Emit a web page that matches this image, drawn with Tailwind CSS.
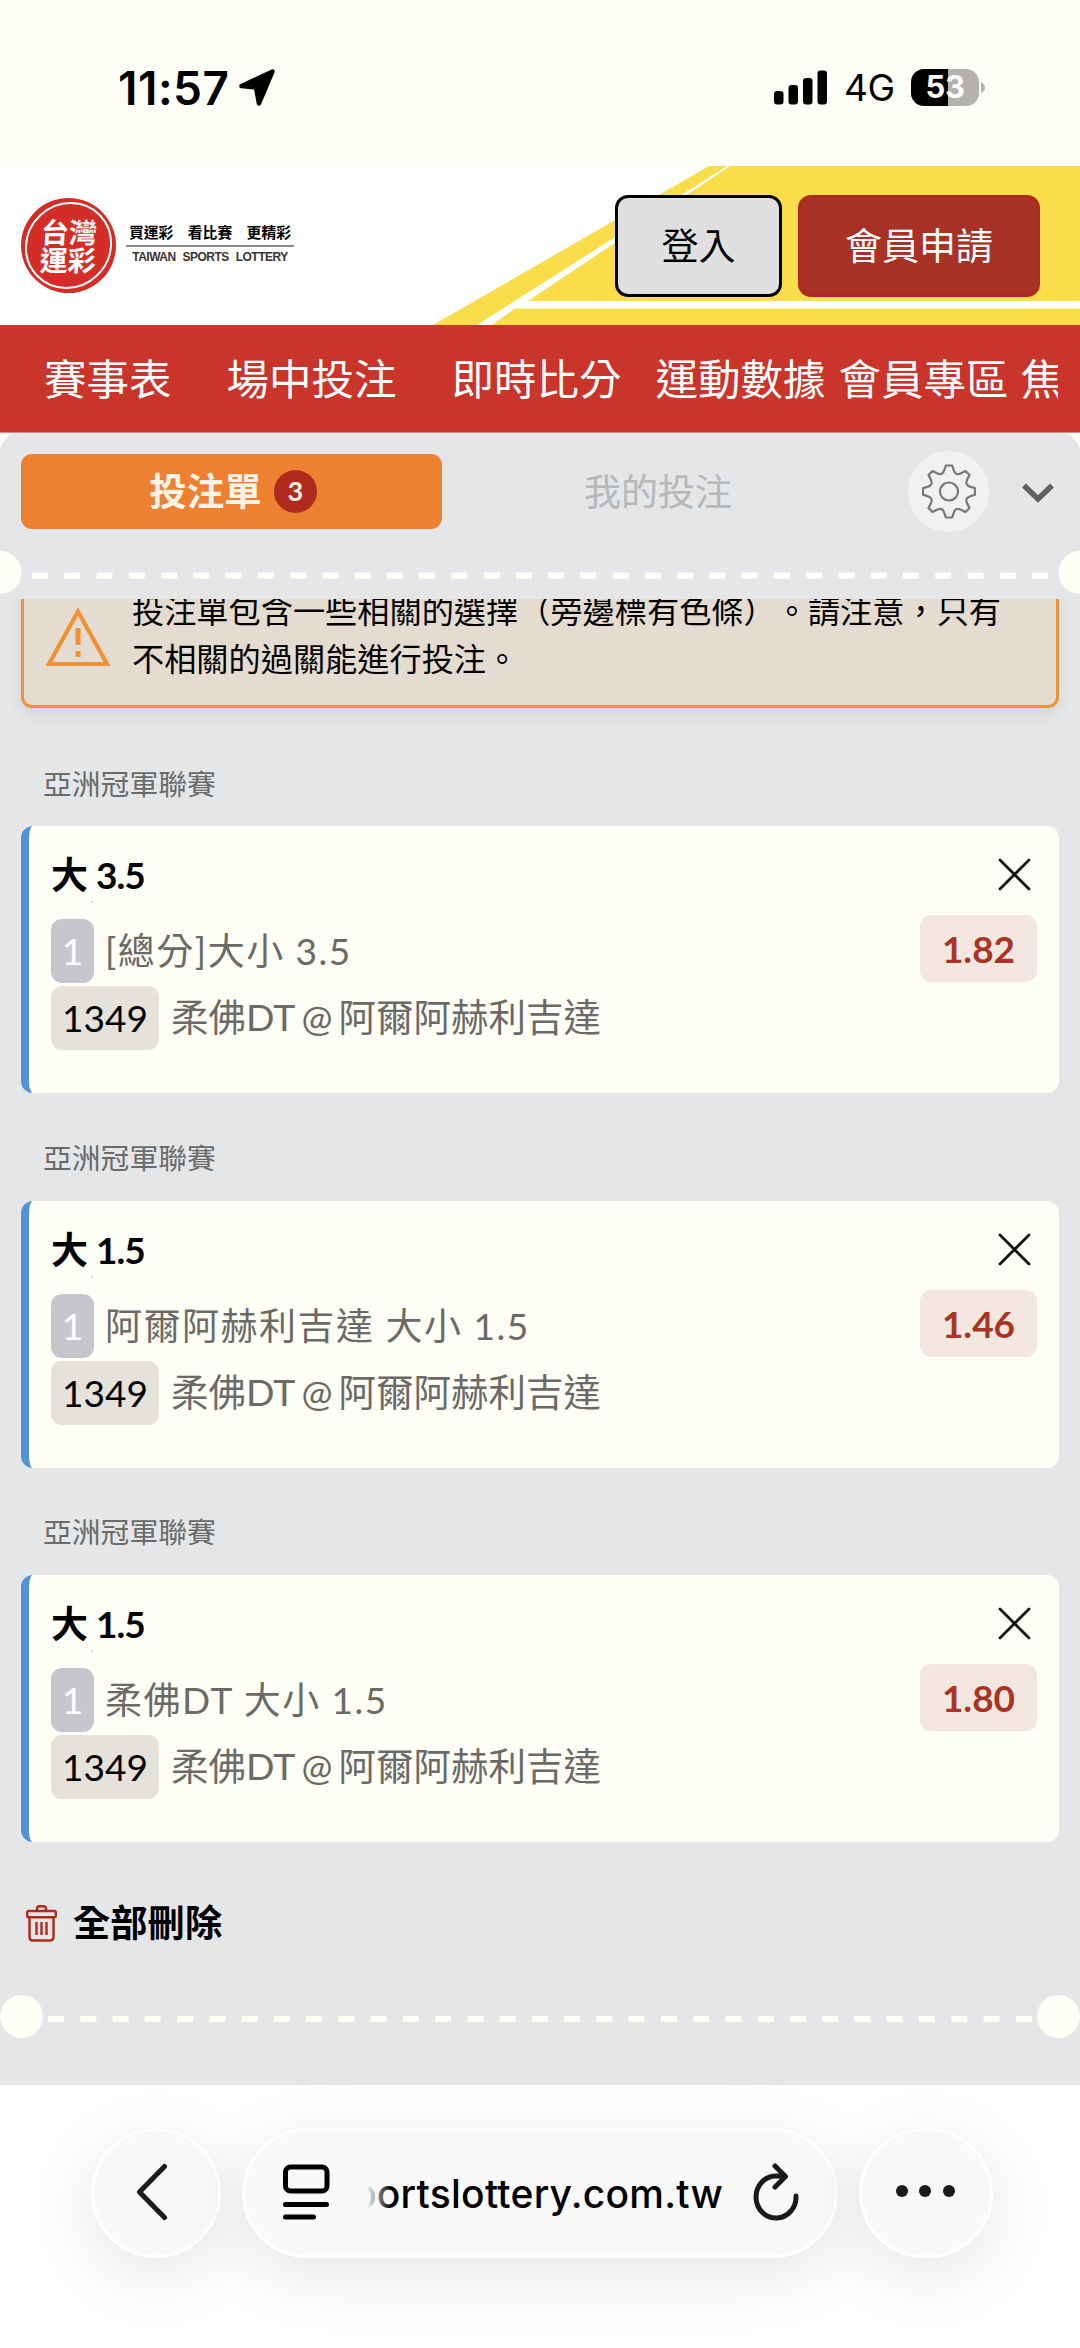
<!DOCTYPE html>
<html lang="zh-Hant">
<head>
<meta charset="utf-8">
<title>台灣運彩</title>
<script src="https://cdn.jsdelivr.net/npm/@tailwindcss/browser@4"></script>
</head>
<body class="w-[1080px] h-[2348px] overflow-hidden bg-[#fffef7] flex flex-col font-['Lato','Noto_Sans_CJK_TC',sans-serif] text-black">

<!-- status bar -->
<div class="h-[166px] shrink-0 flex items-center justify-between pl-[118px] pr-[95px] pt-[9px] font-['Inter',sans-serif]">
  <div class="flex items-center gap-[9px]">
    <span class="text-[46px] leading-[54px] font-semibold tracking-[0.500px] w-[112px] whitespace-nowrap">11:57</span>
    <svg class="w-[36px] h-[37px]" viewBox="0 0 36 37"><path d="M33.5 2.5 20 34.5 17 18.5 2.5 17z" fill="#000" stroke="#000" stroke-width="4.5" stroke-linejoin="round"/></svg>
  </div>
  <div class="flex items-center">
    <svg class="w-[53px] h-[35px] mr-[17px]" viewBox="0 0 53 35"><rect x="0" y="21" width="9.5" height="13.500" rx="3"/><rect x="14.500" y="15" width="9.500" height="19.500" rx="3"/><rect x="29" y="8" width="9.500" height="26.500" rx="3"/><rect x="43.500" y="0.500" width="9.500" height="34" rx="3"/></svg>
    <span class="text-[37px] leading-[40px] tracking-[-0.500px] w-[50px] mr-[17px] pt-[1px] whitespace-nowrap">4G</span>
    <div class="relative w-[68px] h-[37px] rounded-[13px] overflow-hidden flex items-center justify-center bg-linear-to-r from-black from-[54%] to-[#b3b2ad] to-[54%] text-white font-bold text-[31px] tracking-[-0.500px]">53</div>
    <svg class="w-[4px] h-[11px] ml-[2px]" viewBox="0 0 4 11"><path d="M0 0Q4 2 4 5.500T0 11z" fill="#b3b2ad"/></svg>
  </div>
</div>

<!-- header -->
<header class="relative h-[159px] shrink-0 bg-white">
  <svg class="absolute inset-0 w-full h-full" viewBox="0 0 1080 159"><path d="M709 0H1080V159H433z" fill="#f9dd4a"/><path d="M727 0H730L528 135H1080V142.500H515L492 159H477z" fill="#fff"/></svg>
  <div class="relative flex items-start h-full pl-[21px] pr-[40px]">
    <div class="mt-[32px] size-[95px] rounded-full bg-[#d42d27] p-[4px]">
      <div class="size-full rounded-full border-2 border-white flex flex-col items-center justify-center text-white font-bold text-[28px] leading-[28px] -skew-x-3"><span>台灣</span><span>運彩</span></div>
    </div>
    <div class="mt-[55px] ml-[10px] w-[168px] flex flex-col items-center">
      <div class="w-full flex justify-between px-[3px] text-[14.800px] leading-[22px] font-bold"><span>買運彩</span><span>看比賽</span><span>更精彩</span></div>
      <div class="mt-[2px] w-full h-[2px] bg-[#8a8888]"></div>
      <div class="mt-[3px] text-[12px] leading-[14px] font-bold text-[#3a3333] font-['Liberation_Sans',sans-serif] tracking-[-0.500px] [word-spacing:4px] whitespace-nowrap">TAIWAN SPORTS LOTTERY</div>
    </div>
    <div class="ml-auto mt-[29px] flex gap-[16px] text-[37px]">
      <div class="w-[167px] h-[102px] rounded-[13px] border-[3px] border-black bg-[#e0e0e0] flex items-center justify-center">登入</div>
      <div class="w-[242px] h-[102px] rounded-[13px] border-[3px] border-[#b02a20] bg-[#a73225] text-white flex items-center justify-center">會員申請</div>
    </div>
  </div>
</header>

<!-- navigation -->
<nav class="h-[108px] shrink-0 bg-[#c9342b] border-b border-[#d98a84] pl-[44px] pr-[22px] text-white text-[42.500px] leading-[107px]">
  <div class="flex overflow-hidden whitespace-nowrap"><span class="mr-[55px]">賽事表</span><span class="mr-[55px]">場中投注</span><span class="mr-[34px]">即時比分</span><span class="mr-[13px]">運動數據</span><span class="mr-[12px]">會員專區</span><span>焦</span></div>
</nav>

<!-- betting slip -->
<main class="h-[1652px] shrink-0 bg-[#e4e6e8] rounded-t-[20px] flex flex-col">
  <div class="h-[118px] shrink-0 flex items-start pl-[21px] pt-[21px]">
    <div class="w-[421px] h-[75px] rounded-[11px] bg-[#ee8032] text-[#fff3e6] flex items-center justify-center gap-[12px] pl-[3px] text-[37.500px] font-bold">
      <span>投注單</span><span class="size-[43px] rounded-full bg-[#b02a20] text-[27px] font-bold flex items-center justify-center">3</span>
    </div>
    <div class="w-[432px] h-[75px] flex items-center justify-center text-[37px] text-[#b5b7b9]">我的投注</div>
    <div class="ml-[34px] -mt-[3px] size-[81px] rounded-full bg-[#f1f1f2] flex items-center justify-center">
      <svg class="w-[54px] h-[55px]" viewBox="-27 -27.500 54 55" fill="none" stroke="#77787a" stroke-width="2.200" stroke-linejoin="round"><circle r="9"/><path d="M-3.200-26H3.200C5-21 4.500-19 7.500-17.500C10.500-16.500 12-18.500 16.500-20.500L20.500-16.500C18.500-12 16.500-10.500 17.500-7.500C19-4.500 21-5 26-3.200V3.200C21 5 19 4.500 17.500 7.500C16.500 10.500 18.500 12 20.500 16.500L16.500 20.500C12 18.500 10.500 16.500 7.500 17.500C4.500 19 5 21 3.200 26H-3.200C-5 21-4.500 19-7.500 17.500C-10.500 16.500-12 18.500-16.500 20.500L-20.500 16.500C-18.500 12-16.500 10.500-17.500 7.500C-19 4.500-21 5-26 3.200V-3.200C-21-5-19-4.500-17.500-7.500C-16.500-10.500-18.500-12-20.500-16.500L-16.500-20.500C-12-18.500-10.500-16.500-7.500-17.500C-4.500-19-5-21-3.200-26z"/></svg>
    </div>
    <svg class="ml-[33px] mt-[29px] w-[32px] h-[20px]" viewBox="0 0 32 20"><path d="M2 2.500 16 16 30 2.500" fill="none" stroke="#5f6061" stroke-width="5.500"/></svg>
  </div>

  <div class="h-[48px] shrink-0 w-full">
    <svg class="w-[1080px] h-[48px]" viewBox="0 0 1080 48"><circle cx="0" cy="21.500" r="21.500" fill="#fffef7"/><circle cx="1080" cy="21.500" r="21.500" fill="#fffef7"/><path d="M32 24.500H1049" stroke="#fffef7" stroke-width="6" stroke-dasharray="16 16.260"/></svg>
  </div>

  <!-- scrolled list, upper part of the notice runs under the tabs -->
  <div class="h-[1394px] overflow-hidden px-[21px]">
    <div class="-mt-[39px] h-[148px] w-[1038px] rounded-[11px] border-[3px] border-[#ee9236] bg-[#e5dcd1] shadow-[0_6px_16px_rgba(0,0,0,0.08)] flex pl-[22px]">
      <svg class="mt-[44px] w-[64px] h-[60px] shrink-0" viewBox="0 0 64 60"><path d="M32 4.500 61 57H3z" fill="none" stroke="#ee9236" stroke-width="4.200"/><path d="M32 21V38M32 44V50" stroke="#ee9236" stroke-width="5.200"/></svg>
      <div class="ml-[22px] mt-[24px] text-[32.200px] leading-[48px] whitespace-nowrap [text-spacing-trim:space-all]">投注單包含一些相關的選擇（旁邊標有色條）。請注意，只有<br>不相關的過關能進行投注。</div>
    </div>

    <div class="mt-[51px] h-[50px] ml-[22px] leading-[50px] text-[28.800px] text-[#6a6a6b]">亞洲冠軍聯賽</div>
    <section class="mt-[17px] w-[1038px] h-[267px] rounded-[12px] border-l-[8px] border-[#5094d6] bg-[#fffef7] pl-[22px] pr-[22px]">
      <div class="relative flex h-[89px] justify-between items-center pt-[8px]">
        <h3 class="text-[37px] font-bold tracking-[-1px] whitespace-nowrap [word-spacing:1px]">大 3.5</h3>
        <svg class="w-[33px] h-[33px] mr-[6px]" viewBox="0 0 33 33"><path d="M2 2 31 31M31 2 2 31" stroke="#111" stroke-width="2.800" stroke-linecap="round"/></svg>
        <i class="absolute left-[40px] top-[75px] size-[2px] bg-[#c9dfec]"></i>
      </div>
      <div class="flex justify-between h-[68px]">
        <div class="flex items-center pt-[3px] text-[37px] text-[#6b6a66] whitespace-nowrap"><span class="w-[43px] h-[64px] rounded-[11px] bg-[#c7c6cc] text-white flex items-center justify-center">1</span><span class="ml-[11px] tracking-[1.500px]">[總分]大小 3.5</span></div>
        <span class="w-[117px] h-[67px] rounded-[11px] bg-[#f4e7df] text-[#a83426] text-[37px] font-bold flex items-center justify-center">1.82</span>
      </div>
      <div class="flex items-center h-[69px] text-[37.500px] text-[#6b6a66] whitespace-nowrap"><span class="w-[108px] h-[64px] rounded-[11px] bg-[#e5e2dc] text-black text-[37px] flex items-center justify-center">1349</span><span class="ml-[12px]">柔佛DT</span><span class="ml-[6px] text-[37px]">@</span><span class="ml-[6px]">阿爾阿赫利吉達</span></div>
    </section>

    <div class="mt-[41px] h-[50px] ml-[22px] leading-[49px] text-[28.800px] text-[#6a6a6b]">亞洲冠軍聯賽</div>
    <section class="mt-[17px] w-[1038px] h-[267px] rounded-[12px] border-l-[8px] border-[#5094d6] bg-[#fffef7] pl-[22px] pr-[22px]">
      <div class="relative flex h-[89px] justify-between items-center pt-[8px]">
        <h3 class="text-[37px] font-bold tracking-[-1px] whitespace-nowrap [word-spacing:1px]">大 1.5</h3>
        <svg class="w-[33px] h-[33px] mr-[6px]" viewBox="0 0 33 33"><path d="M2 2 31 31M31 2 2 31" stroke="#111" stroke-width="2.800" stroke-linecap="round"/></svg>
        <i class="absolute left-[40px] top-[75px] size-[2px] bg-[#c9dfec]"></i>
      </div>
      <div class="flex justify-between h-[68px]">
        <div class="flex items-center pt-[3px] text-[37px] text-[#6b6a66] whitespace-nowrap"><span class="w-[43px] h-[64px] rounded-[11px] bg-[#c7c6cc] text-white flex items-center justify-center">1</span><span class="ml-[11px] tracking-[1.500px]">阿爾阿赫利吉達 大小 1.5</span></div>
        <span class="w-[117px] h-[67px] rounded-[11px] bg-[#f4e7df] text-[#a83426] text-[37px] font-bold flex items-center justify-center">1.46</span>
      </div>
      <div class="flex items-center h-[69px] text-[37.500px] text-[#6b6a66] whitespace-nowrap"><span class="w-[108px] h-[64px] rounded-[11px] bg-[#e5e2dc] text-black text-[37px] flex items-center justify-center">1349</span><span class="ml-[12px]">柔佛DT</span><span class="ml-[6px] text-[37px]">@</span><span class="ml-[6px]">阿爾阿赫利吉達</span></div>
    </section>

    <div class="mt-[40px] h-[50px] ml-[22px] leading-[49px] text-[28.800px] text-[#6a6a6b]">亞洲冠軍聯賽</div>
    <section class="mt-[17px] w-[1038px] h-[267px] rounded-[12px] border-l-[8px] border-[#5094d6] bg-[#fffef7] pl-[22px] pr-[22px]">
      <div class="relative flex h-[89px] justify-between items-center pt-[8px]">
        <h3 class="text-[37px] font-bold tracking-[-1px] whitespace-nowrap [word-spacing:1px]">大 1.5</h3>
        <svg class="w-[33px] h-[33px] mr-[6px]" viewBox="0 0 33 33"><path d="M2 2 31 31M31 2 2 31" stroke="#111" stroke-width="2.800" stroke-linecap="round"/></svg>
        <i class="absolute left-[40px] top-[75px] size-[2px] bg-[#c9dfec]"></i>
      </div>
      <div class="flex justify-between h-[68px]">
        <div class="flex items-center pt-[3px] text-[37px] text-[#6b6a66] whitespace-nowrap"><span class="w-[43px] h-[64px] rounded-[11px] bg-[#c7c6cc] text-white flex items-center justify-center">1</span><span class="ml-[11px] tracking-[1.500px]">柔佛DT 大小 1.5</span></div>
        <span class="w-[117px] h-[67px] rounded-[11px] bg-[#f4e7df] text-[#a83426] text-[37px] font-bold flex items-center justify-center">1.80</span>
      </div>
      <div class="flex items-center h-[69px] text-[37.500px] text-[#6b6a66] whitespace-nowrap"><span class="w-[108px] h-[64px] rounded-[11px] bg-[#e5e2dc] text-black text-[37px] flex items-center justify-center">1349</span><span class="ml-[12px]">柔佛DT</span><span class="ml-[6px] text-[37px]">@</span><span class="ml-[6px]">阿爾阿赫利吉達</span></div>
    </section>

    <div class="mt-[55px] h-[52px] pl-[5px] flex items-center gap-[16px] text-[37.300px] font-bold whitespace-nowrap">
      <svg class="w-[31px] h-[37px]" viewBox="0 0 31 37" fill="none" stroke="#b02a1e" stroke-width="2.400"><rect x="1.200" y="6" width="28.600" height="6.200" rx="1.500"/><path d="M11 6V4Q11 1.200 13.500 1.200H17.500Q20 1.200 20 4V6M3.500 12.200V32Q3.500 35.500 7 35.500H24Q27.500 35.500 27.500 32V12.200M10.500 17V30M15.500 17V30M20.500 17V30"/></svg>
      <span>全部刪除</span>
    </div>
  </div>

  <svg class="w-[1080px] h-[46px] mt-[1px] shrink-0" viewBox="0 0 1080 46"><circle cx="21.500" cy="22.500" r="21.500" fill="#fffef7"/><circle cx="1058.500" cy="22.500" r="21.500" fill="#fffef7"/><path d="M48 25H1033" stroke="#fffef7" stroke-width="6" stroke-dasharray="16 16.260"/></svg>
</main>

<!-- browser toolbar -->
<footer class="h-[263px] shrink-0 bg-white flex items-start pt-[43px] pl-[91px]">
  <div class="w-[130px] h-[130px] rounded-full border-[3px] border-white bg-[#f9f9f9] shadow-[0_16px_70px_rgba(0,0,0,0.11)] flex items-center pl-[42px]">
    <svg class="w-[32px] h-[58px] -mt-[2px]" viewBox="0 0 32 58"><path d="M28.500 3.500 3.500 29 28.500 54.500" fill="none" stroke="#1a1a1a" stroke-width="5" stroke-linecap="round" stroke-linejoin="round"/></svg>
  </div>
  <div class="ml-[21px] w-[596px] h-[130px] rounded-full border-[3px] border-white bg-[#f9f9f9] shadow-[0_16px_70px_rgba(0,0,0,0.11)] flex items-center pl-[37px]">
    <svg class="w-[48px] h-[56px] shrink-0 -mt-[2px]" viewBox="0 0 48 56" fill="none" stroke="#000" stroke-width="5" stroke-linecap="round"><rect x="3.500" y="3" width="41.500" height="24" rx="5"/><path d="M3.500 40.500H44.500M3.500 53H31.500"/></svg>
    <div class="relative ml-[37px] mt-[1px] w-[356px] h-[56px] overflow-hidden flex justify-end">
      <span class="text-[39px] leading-[56px] font-medium tracking-[0.250px] whitespace-nowrap font-['Inter',sans-serif] [font-variant-ligatures:none]">sportslottery.com.tw</span>
      <div class="absolute left-0 top-0 w-[24px] h-full bg-linear-to-r from-[#f9f9f9] to-[#f9f9f9]/0"></div>
    </div>
    <svg class="ml-[30px] -mt-[3px] w-[48px] h-[60px] shrink-0" viewBox="0 0 48 60" fill="none" stroke="#1a1a1a" stroke-width="5" stroke-linecap="round" stroke-linejoin="round"><path d="M43 34A20 21 0 1 1 23 14H32M22 4 32.500 14.500 22 25"/></svg>
  </div>
  <div class="ml-[21px] w-[134px] h-[130px] rounded-full border-[3px] border-white bg-[#f9f9f9] shadow-[0_16px_70px_rgba(0,0,0,0.11)] flex items-center justify-center gap-[11.500px] pb-[4px] pr-[2px]">
    <i class="size-[12px] rounded-full bg-[#1a1a1a]"></i><i class="size-[12px] rounded-full bg-[#1a1a1a]"></i><i class="size-[12px] rounded-full bg-[#1a1a1a]"></i>
  </div>
</footer>
</body>
</html>
